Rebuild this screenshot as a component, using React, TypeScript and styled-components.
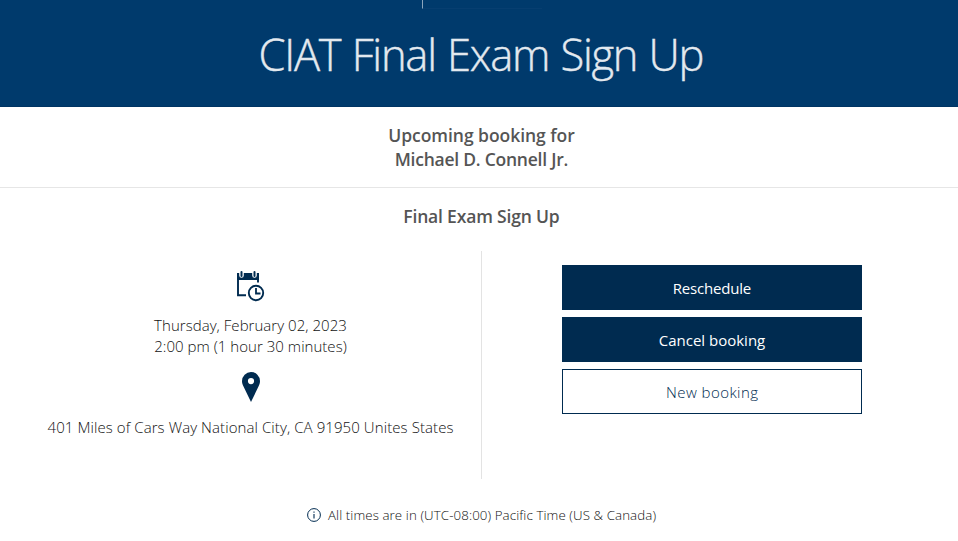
import React from "react";
import styled, { createGlobalStyle, css } from "styled-components";

const navy = "#002b50";

const GlobalStyle = createGlobalStyle`
  * { box-sizing: border-box; }
  html, body { margin: 0; padding: 0; background: #fff; }
  body { font-family: "Open Sans", "Noto Sans", sans-serif; color: #333; overflow: hidden; }
`;

const Page = styled.div`
  width: 958px;
  height: 541px;
  display: flex;
  flex-direction: column;
  background: #fff;
`;

const Banner = styled.header`
  position: relative;
  height: 107px;
  flex: none;
  display: flex;
  justify-content: center;
  padding: 25px 0 0 5px;
  background: #003a6c;
  border-bottom: 1px solid #003463;
`;

const LogoEdge = styled.div`
  position: absolute;
  top: 0;
  left: 422px;
  width: 120px;
  height: 9px;
  border-left: 1px solid #8ba5bd;
  border-bottom: 1px solid #073e70;
`;

const Title = styled.h1`
  margin: 0;
  font-size: 43.5px;
  line-height: 60px;
  font-weight: 300;
  color: #e3e9ef;
  white-space: nowrap;
  word-spacing: 1.2px;
  -webkit-text-stroke: 0.4px #e3e9ef;
`;

const Fit = styled.span<{ $track?: number }>`
  display: block;
  white-space: nowrap;
  letter-spacing: ${(p) => p.$track ?? 0}px;
  margin-right: ${(p) => -(p.$track ?? 0)}px;
`;

const Upcoming = styled.section`
  height: 81px;
  flex: none;
  display: flex;
  flex-direction: column;
  align-items: center;
  padding: 16px 0 0 5px;
  border-bottom: 1px solid #e6e6e6;
  font-size: 17.5px;
  line-height: 24px;
  font-weight: 600;
  color: #555;
`;

const ServiceName = styled.h2`
  margin: 0;
  height: 63px;
  flex: none;
  display: flex;
  justify-content: center;
  padding: 16px 0 0 5px;
  font-size: 17.5px;
  line-height: 24px;
  font-weight: 600;
  color: #555;
`;

const Columns = styled.main`
  height: 228px;
  flex: none;
  display: grid;
  grid-template-columns: 482px 1fr;
`;

const Details = styled.section`
  display: flex;
  flex-direction: column;
  align-items: center;
  padding: 20px 0 0 20px;
  border-right: 1px solid #e3e3e3;
  font-size: 15px;
  line-height: 21px;
  font-weight: 300;
  color: #111;
`;

const CalendarIcon = styled.svg`
  width: 28px;
  height: 32px;
  flex: none;
  margin-bottom: 12px;
`;

const PinIcon = styled.svg`
  width: 18px;
  height: 30px;
  flex: none;
  margin: 15px 0 15px;
`;

const Actions = styled.section`
  display: flex;
  flex-direction: column;
  gap: 7px;
  padding: 14px 0 0 80px;
`;

const Button = styled.button<{ $outline?: boolean }>`
  width: 300px;
  height: 45px;
  padding: 2px 0 0;
  display: flex;
  align-items: center;
  justify-content: center;
  border: 1px solid ${navy};
  border-radius: 0;
  font-family: inherit;
  font-size: 15px;
  line-height: 21px;
  background: ${navy};
  color: #fff;
  font-weight: 400;
  ${(p) =>
    p.$outline &&
    css`
      background: #fff;
      color: ${navy};
      font-weight: 300;
    `}
`;

const Footer = styled.footer`
  display: flex;
  justify-content: center;
  align-items: center;
  gap: 7px;
  margin-top: 26px;
  padding-left: 5px;
  height: 20px;
  font-size: 13.3px;
  font-weight: 300;
  color: #111;
`;

const InfoIcon = styled.svg`
  width: 14px;
  height: 14px;
  flex: none;
`;

export default function App() {
  return (
    <Page>
      <GlobalStyle />
      <Banner>
        <LogoEdge />
        <Title><Fit $track={-1.24}>CIAT Final Exam Sign Up</Fit></Title>
      </Banner>
      <Upcoming>
        <Fit $track={-0.04}>Upcoming booking for</Fit>
        <Fit $track={-0.24}>Michael D. Connell Jr.</Fit>
      </Upcoming>
      <ServiceName><Fit $track={-0.18}>Final Exam Sign Up</Fit></ServiceName>
      <Columns>
        <Details>
          <CalendarIcon viewBox="0 0 28 32" fill="none" stroke={navy}>
            <path d="M0 2h22v7H0z" fill={navy} stroke="none" />
            <path d="M1 7v17.200h8M21 8v3.500" strokeWidth="1.9" />
            <path d="M4.500 0v4.500M17.500 0v4.500" stroke="#fff" strokeWidth="4.600" strokeLinecap="round" />
            <path d="M4.500 1v4M17.500 1v4" strokeWidth="2" strokeLinecap="round" />
            <circle cx="19" cy="22" r="7.200" strokeWidth="1.900" />
            <path d="M19 17v5.500h4.500" strokeWidth="1.800" />
          </CalendarIcon>
          <Fit $track={0.04}>Thursday, February 02, 2023</Fit>
          <Fit $track={0.03}>2:00 pm (1 hour 30 minutes)</Fit>
          <PinIcon viewBox="0 0 18 30">
            <path fill={navy} fillRule="evenodd" d="M9 0a9 9 0 0 1 9 9c0 2-.6 3.700-1.400 5.300L9 30 1.400 14.300C.6 12.700 0 11 0 9a9 9 0 0 1 9-9Zm0 6a3.100 3.100 0 1 0 0 6.200A3.100 3.100 0 0 0 9 6Z" />
          </PinIcon>
          <Fit $track={0.085}>401 Miles of Cars Way National City, CA 91950 Unites States</Fit>
        </Details>
        <Actions>
          <Button><Fit $track={-0.2}>Reschedule</Fit></Button>
          <Button><Fit $track={0}>Cancel booking</Fit></Button>
          <Button $outline><Fit $track={0.45}>New booking</Fit></Button>
        </Actions>
      </Columns>
      <Footer>
        <InfoIcon viewBox="0 0 14 14" fill="none" stroke={navy}>
          <circle cx="7" cy="7" r="6.400" strokeWidth="1" />
          <path d="M7 6v4.500M7 3.500v1.200" strokeWidth="1.100" />
        </InfoIcon>
        <Fit $track={0.09}>All times are in (UTC-08:00) Pacific Time (US &amp; Canada)</Fit>
      </Footer>
    </Page>
  );
}
